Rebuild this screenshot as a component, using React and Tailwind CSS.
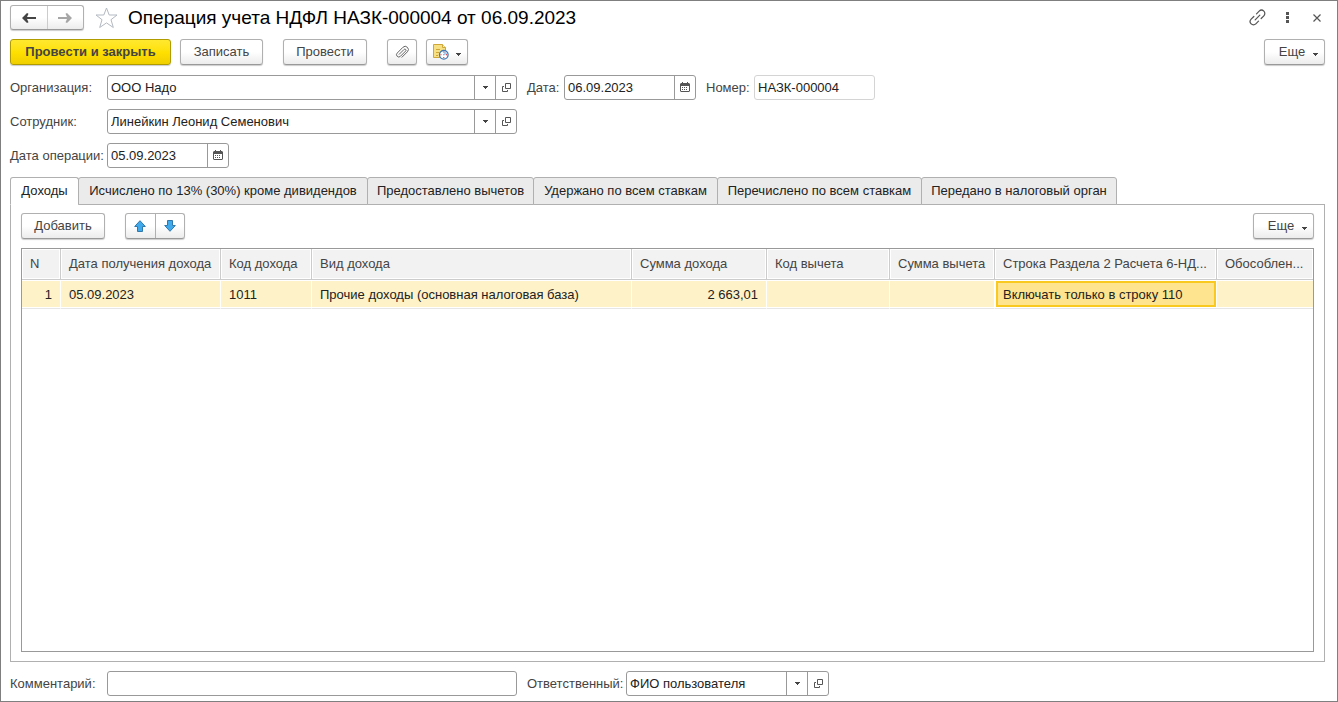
import React, { useState } from 'react'
import clsx from 'clsx'

const tabs = [
  { id: 'income', label: 'Доходы', width: 'w-[69px]' },
  { id: 'calculated', label: 'Исчислено по 13% (30%) кроме дивидендов', width: 'w-[290px]' },
  { id: 'deductions', label: 'Предоставлено вычетов', width: 'w-[167px]' },
  { id: 'withheld', label: 'Удержано по всем ставкам', width: 'w-[185px]' },
  { id: 'transferred', label: 'Перечислено по всем ставкам', width: 'w-[205px]' },
  { id: 'submitted', label: 'Передано в налоговый орган', width: 'w-[196px]' },
]

const columns = [
  { key: 'n', title: 'N', width: 'w-[39px]', align: 'text-right' },
  { key: 'date', title: 'Дата получения дохода', width: 'w-[160px]' },
  { key: 'code', title: 'Код дохода', width: 'w-[91px]' },
  { key: 'kind', title: 'Вид дохода', width: '' },
  { key: 'sum', title: 'Сумма дохода', width: 'w-[135px]', align: 'text-right' },
  { key: 'deductionCode', title: 'Код вычета', width: 'w-[123px]' },
  { key: 'deductionSum', title: 'Сумма вычета', width: 'w-[105px]' },
  { key: 'line', title: 'Строка Раздела 2 Расчета 6-НД...', width: 'w-[222px]' },
  { key: 'unit', title: 'Обособлен...', width: 'w-[96px]' },
]

const rows = [
  {
    n: '1',
    date: '05.09.2023',
    code: '1011',
    kind: 'Прочие доходы (основная налоговая база)',
    sum: '2 663,01',
    deductionCode: '',
    deductionSum: '',
    line: 'Включать только в строку 110',
    unit: '',
  },
]

function Caret({ className }) {
  return (
    <svg width="5" height="3" viewBox="0 0 5 3" className={clsx('shrink-0', className)} aria-hidden="true">
      <path d="M0 0h5v1H4v1H3v1H2V2H1V1H0z" fill="#444" />
    </svg>
  )
}

function OpenIcon() {
  return (
    <svg width="9" height="9" viewBox="0 0 9 9" fill="none" stroke="#555" aria-hidden="true">
      <path d="M3.5 .5h5v5h-5z" />
      <path d="M2 3.5H.5v5h5V7" />
    </svg>
  )
}

function CalendarIcon() {
  return (
    <svg width="10" height="10" viewBox="0 0 10 10" aria-hidden="true">
      <path d="M1 1h1V0h1v1h4V0h1v1h1l1 1v7l-1 1H1L0 9V2z" fill="#555" />
      <path d="M1 4h8v5H1z" fill="#fff" />
      <path d="M2 5h1v1H2zM4 5h1v1H4zM6 5h1v1H6zM2 7h1v1H2zM4 7h1v1H4zM6 7h1v1H6z" fill="#555" />
    </svg>
  )
}

function ArrowIcon({ forward }) {
  return (
    <svg width="14" height="10" viewBox="0 0 14 10" aria-hidden="true">
      {forward ? (
        <path d="M0 4h9L7.500.8 9 0l5 5-5 5-1.500-.8L9 6H0z" fill="#a6a6a6" />
      ) : (
        <path d="M14 4H5L6.500.8 5 0 0 5l5 5 1.500-.8L5 6h9z" fill="#444" />
      )}
    </svg>
  )
}

function MoveIcon({ down }) {
  return (
    <svg width="12" height="12" viewBox="0 0 12 12" fill="#3fa9ec" stroke="#2f78ab" aria-hidden="true">
      {down ? <path d="M3.5.5h5v5h2.8L6 11.3.7 5.5h2.8z" /> : <path d="M3.5 11.5h5v-5h2.8L6 .7.7 6.5h2.8z" />}
    </svg>
  )
}

function Button({ className, children, ...props }) {
  return (
    <button
      type="button"
      className={clsx(
        'flex items-center justify-center border rounded-[3px] shadow-[0_1px_1px_#0003] shrink-0',
        className
      )}
      {...props}
    >
      {children}
    </button>
  )
}

const plain = 'border-[#b0b0b0] border-b-[#999] bg-linear-to-b from-white from-50% to-[#ececec] text-[#444]'

function MoreButton() {
  return (
    <Button className={clsx(plain, 'h-[26px] w-[61px] gap-2 pl-2')}>
      Еще
      <Caret className="mt-1" />
    </Button>
  )
}

// Text box with the small buttons that belong to it
function Field({ id, label, labelWidth, width, value, icons = [], readOnly }) {
  const [text, setText] = useState(value)

  return (
    <div className="flex items-center">
      <label htmlFor={id} className={clsx('shrink-0 whitespace-nowrap text-[#444]', labelWidth)}>
        {label}
      </label>
      <div
        className={clsx(
          'flex h-[25px] rounded-[3px] border bg-white overflow-hidden',
          readOnly ? 'border-[#d4d4d4]' : 'border-[#999]',
          width
        )}
      >
        <input
          id={id}
          type="text"
          value={text}
          readOnly={readOnly}
          onChange={(e) => setText(e.target.value)}
          className="min-w-0 flex-1 px-[3px] text-[#222] outline-none"
        />
        {icons.map((icon) => (
          <button
            key={icon}
            type="button"
            aria-label={icon}
            className="flex w-[21px] shrink-0 items-center justify-center border-l border-[#999] pb-px"
          >
            {icon === 'Выбрать' && <Caret />}
            {icon === 'Открыть' && <OpenIcon />}
            {icon === 'Календарь' && <CalendarIcon />}
          </button>
        ))}
      </div>
    </div>
  )
}

function Header() {
  return (
    <header className="flex items-center pt-1">
      <div className="flex h-[25px] w-[74px] shrink-0 rounded-[3px] border border-[#b0b0b0] border-b-[#999] bg-linear-to-b from-white from-50% to-[#ececec] shadow-[0_1px_1px_#0003]">
        <button type="button" aria-label="Назад" className="flex flex-1 items-center justify-center border-r border-[#ccc]">
          <ArrowIcon />
        </button>
        <button type="button" aria-label="Вперед" className="flex flex-1 items-center justify-center">
          <ArrowIcon forward />
        </button>
      </div>
      <button type="button" aria-label="В избранное" className="ml-[11px] shrink-0">
        <svg width="23" height="22" viewBox="0 0 23 22" fill="none" stroke="#b3b9c1">
          <path d="M11.5 1l2.700 7h7.800l-6 4.700 2.300 7.800-6.800-4.600-6.800 4.600L7 12.700 1 8h7.800z" />
        </svg>
      </button>
      <h1 className="ml-[10px] flex-1 truncate text-[19px] leading-6 text-black">
        Операция учета НДФЛ НАЗК-000004 от 06.09.2023
      </h1>
      <div className="flex items-center">
        <button type="button" aria-label="Получить ссылку">
          <svg width="17" height="17" viewBox="3 3 18 18" fill="none" stroke="#555" strokeWidth="1.300" strokeLinecap="round">
            <g transform="rotate(-45 12 12)">
              <path d="M10 15.500H6a3.500 3.500 0 0 1 0-7h4" />
              <path d="M14 8.500h4a3.500 3.500 0 0 1 0 7h-4" />
              <path d="M8.500 12h7" />
            </g>
          </svg>
        </button>
        <button type="button" aria-label="Дополнительно" className="ml-5">
          <svg width="3" height="11" viewBox="0 0 3 11" fill="#555">
            <path d="M0 0h3v3H0zM0 4h3v3H0zM0 8h3v3H0z" />
          </svg>
        </button>
        <button type="button" aria-label="Закрыть" className="mr-1 ml-6">
          <svg width="8" height="8" viewBox="0 0 8 8" fill="none" stroke="#555" strokeWidth="1.200">
            <path d="M.5.5l7 7M7.500.5l-7 7" />
          </svg>
        </button>
      </div>
    </header>
  )
}

function Toolbar() {
  return (
    <div className="mt-[9px] flex items-center justify-between">
      <div className="flex gap-5">
        <div className="flex gap-[9px]">
          <Button className="h-[26px] w-[161px] border-[#b09c00] bg-linear-to-b from-[#ffe92e] via-[#ffe000] to-[#f0cf00] font-bold text-[#444]">
            Провести и закрыть
          </Button>
          <Button className={clsx(plain, 'h-[26px] w-[83px]')}>Записать</Button>
        </div>
        <Button className={clsx(plain, 'h-[26px] w-[84px]')}>Провести</Button>
        <div className="flex gap-[9px]">
          <Button className={clsx(plain, 'h-[26px] w-[30px]')} aria-label="Присоединенные файлы">
            <svg width="14" height="14" viewBox="0 0 14 14" fill="none" stroke="#666" strokeLinecap="round">
              <path d="M4.200 9.300l4.900-4.900a1.100 1.100 0 0 1 1.600 1.600l-5.300 5.300a2.200 2.200 0 0 1-3.200-3.200l5.700-5.800a3.100 3.100 0 0 1 4.500 4.500L7 12.200" />
            </svg>
          </Button>
          <Button className={clsx(plain, 'h-[26px] w-[42px] gap-[7px]')} aria-label="Создать на основании">
            <svg width="16" height="16" viewBox="0 0 16 16" fill="none">
              <path d="M.5.5h9l3 3v10H.5z" fill="#f7df83" stroke="#cfa638" />
              <path d="M9.500.5v3h3" fill="#fff3bd" stroke="#cfa638" />
              <path d="M3 5.500h4M3 8.500h3M3 11.500h2" stroke="#cfa638" />
              <circle cx="10.800" cy="10.800" r="4.300" fill="#fff" stroke="#3f78b5" strokeWidth="1.300" />
              <path d="M10.800 10.800V7.500a3.300 3.300 0 0 1 3.300 3.300z" fill="#a9cdf0" />
              <path d="M10.300 7.500h1v1h-1zM10.300 13h1v1h-1zM7.500 10.300h1v1h-1zM13 10.300h1v1h-1z" fill="#e02020" />
              <path d="M10.300 10.300h1v1h-1z" fill="#3f78b5" />
            </svg>
            <Caret className="mt-1" />
          </Button>
        </div>
      </div>
      <MoreButton />
    </div>
  )
}

function IncomeTable() {
  return (
    <div className="mt-[9px] flex-1 overflow-hidden border border-[#999] bg-white">
      <table className="w-full table-fixed border-separate border-spacing-0">
        <thead>
          <tr>
            {columns.map((col) => (
              <th
                key={col.key}
                className={clsx(
                  'h-[31px] truncate border-r border-b border-[#ccc] bg-[#f2f2f2] pr-1 pl-2 text-left font-normal text-[#444] shadow-[inset_0_0_0_1px_#fff] last:border-r-0',
                  col.width
                )}
              >
                {col.title}
              </th>
            ))}
          </tr>
        </thead>
        <tbody>
          {rows.map((row) => (
            <tr key={row.n}>
              {columns.map((col) => (
                <td
                  key={col.key}
                  className={clsx(
                    'h-[29px] truncate border-b border-b-[#e6e6e6] px-2 pt-px text-[#222]',
                    col.key === 'line'
                      ? 'bg-[#ffe48f] shadow-[inset_0_0_0_1px_#fff,inset_0_0_0_3px_#f9c920]'
                      : 'border-r border-r-white bg-[#fef2c8] shadow-[inset_0_1px_0_#fff,inset_0_-1px_0_#fff] last:border-r-0',
                    col.align
                  )}
                >
                  {row[col.key]}
                </td>
              ))}
            </tr>
          ))}
        </tbody>
      </table>
    </div>
  )
}

export default function App() {
  const [activeTab, setActiveTab] = useState('income')

  return (
    <div className="flex min-h-screen flex-col border border-[#7f7f7f] bg-white pr-3 pb-[5px] pl-[9px] font-['Liberation_Sans',Arial,sans-serif] text-[13px] leading-4">
      <Header />
      <Toolbar />

      <div className="mt-[10px] flex flex-col gap-[9px]">
        <div className="flex flex-wrap gap-[10px]">
          <Field
            id="organization"
            label="Организация:"
            labelWidth="w-[97px]"
            width="w-[410px]"
            value="ООО Надо"
            icons={['Выбрать', 'Открыть']}
          />
          <Field id="date" label="Дата:" labelWidth="w-[37px]" width="w-[132px]" value="06.09.2023" icons={['Календарь']} />
          <Field id="number" label="Номер:" labelWidth="w-[48px]" width="w-[121px]" value="НАЗК-000004" readOnly />
        </div>
        <Field
          id="employee"
          label="Сотрудник:"
          labelWidth="w-[97px]"
          width="w-[410px]"
          value="Линейкин Леонид Семенович"
          icons={['Выбрать', 'Открыть']}
        />
        <Field
          id="operation-date"
          label="Дата операции:"
          labelWidth="w-[97px]"
          width="w-[122px]"
          value="05.09.2023"
          icons={['Календарь']}
        />
      </div>

      {/* Tabs overlap the panel border by one pixel */}
      <div role="tablist" className="relative mt-[9px] flex">
        {tabs.map((tab) => (
          <button
            key={tab.id}
            type="button"
            role="tab"
            aria-selected={activeTab === tab.id}
            onClick={() => setActiveTab(tab.id)}
            className={clsx(
              '-mr-px h-7 rounded-t-[3px] border border-[#b0b0b0] whitespace-nowrap text-[#222]',
              activeTab === tab.id ? 'border-b-white bg-white' : 'bg-[#ebebeb]',
              tab.width
            )}
          >
            {tab.label}
          </button>
        ))}
      </div>

      <div role="tabpanel" className="-mt-px flex flex-1 flex-col border border-[#b0b0b0] px-[10px] pt-2 pb-[9px]">
        <div className="flex items-center gap-5">
          <Button className={clsx(plain, 'h-[26px] w-[84px]')}>Добавить</Button>
          <div className="flex h-[26px] w-[60px] rounded-[3px] border border-[#b0b0b0] border-b-[#999] bg-linear-to-b from-white from-50% to-[#ececec] shadow-[0_1px_1px_#0003]">
            <button type="button" aria-label="Переместить вверх" className="flex flex-1 items-center justify-center border-r border-[#b0b0b0]">
              <MoveIcon />
            </button>
            <button type="button" aria-label="Переместить вниз" className="flex flex-1 items-center justify-center">
              <MoveIcon down />
            </button>
          </div>
          <div className="ml-auto">
            <MoreButton />
          </div>
        </div>
        <IncomeTable />
      </div>

      <div className="mt-[9px] flex flex-wrap gap-[10px]">
        <Field id="comment" label="Комментарий:" labelWidth="w-[97px]" width="w-[410px]" value="" />
        <Field
          id="responsible"
          label="Ответственный:"
          labelWidth="w-[99px]"
          width="w-[203px]"
          value="ФИО пользователя"
          icons={['Выбрать', 'Открыть']}
        />
      </div>
    </div>
  )
}
